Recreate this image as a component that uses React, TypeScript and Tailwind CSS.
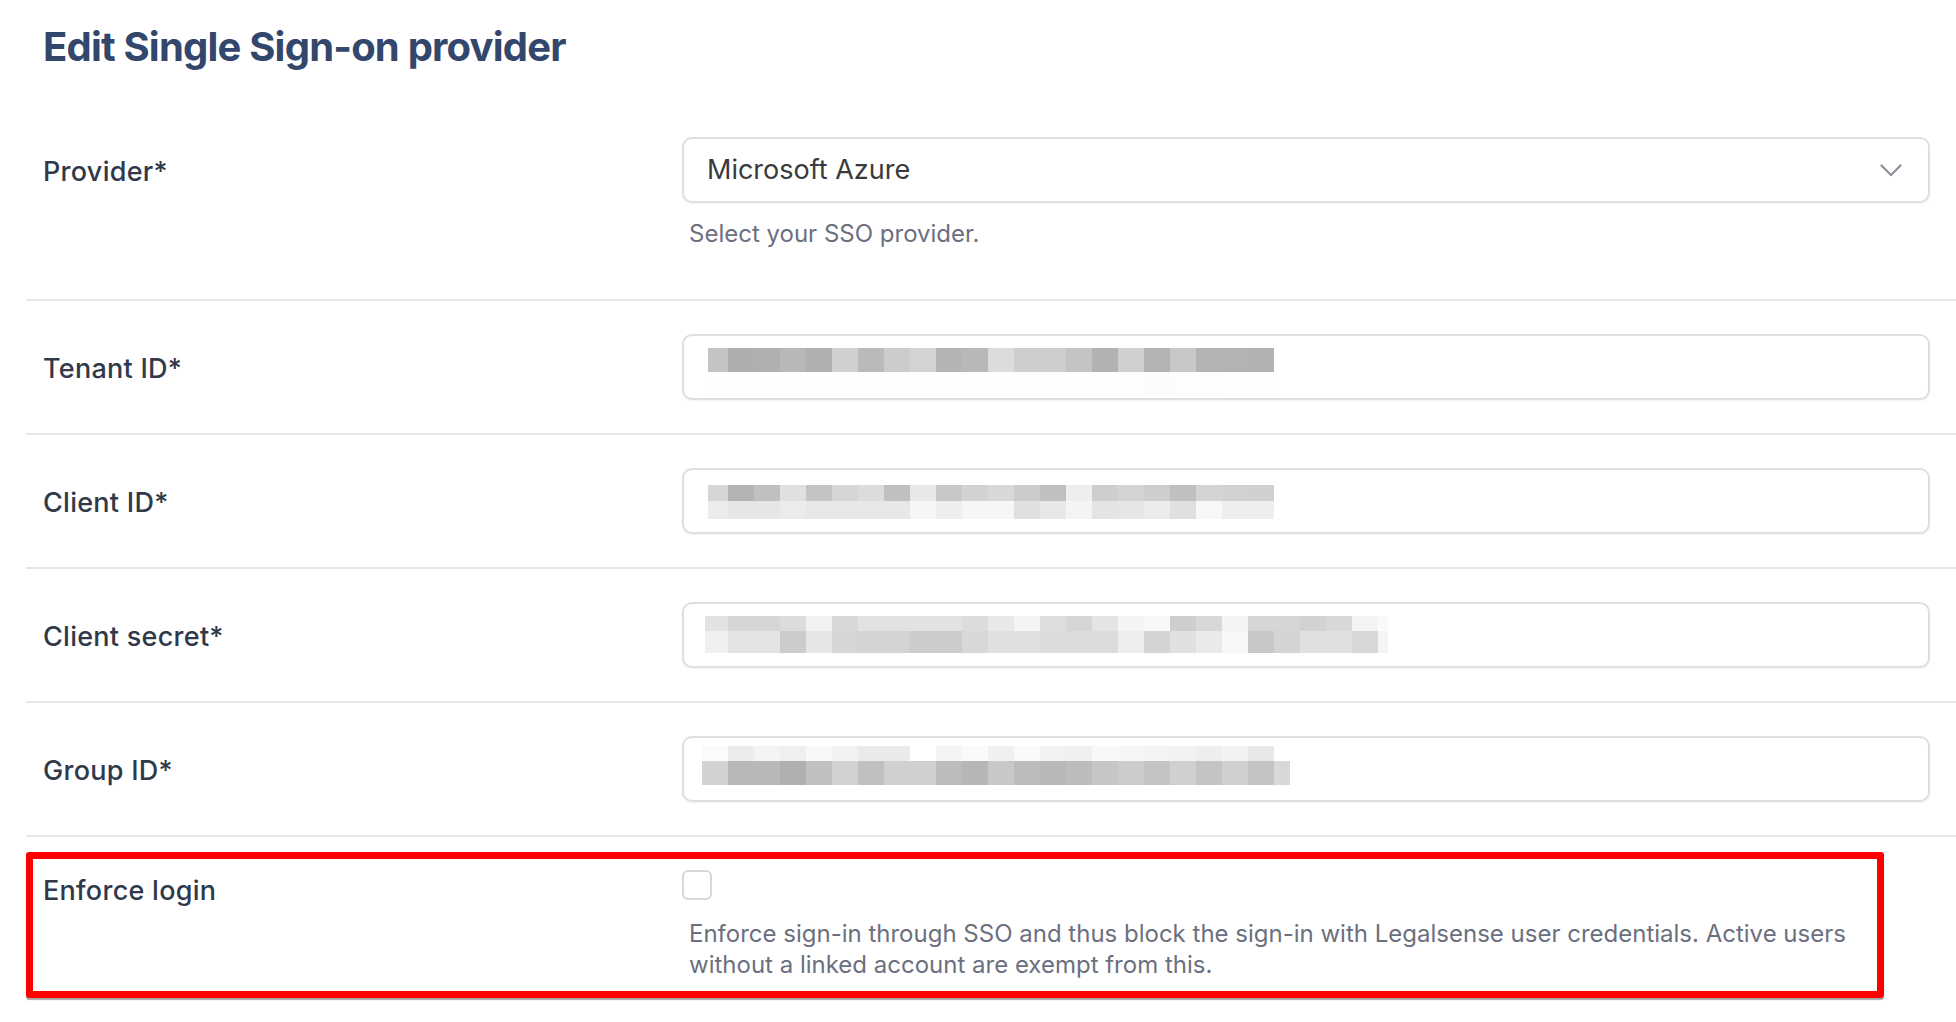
import React from "react";

type Row = { h: number; colors: string[] };
type MosaicSpec = { widths: number[]; rows: Row[] };

function hexes(list: string): string[] {
  return list.split(" ").map((c) => "#" + c + c + c);
}

function makeWidths(first: number, count: number, last?: number): number[] {
  const w = [first];
  for (let i = 0; i < count; i++) w.push(26);
  if (last) w.push(last);
  return w;
}

const tenant: MosaicSpec = {
  widths: makeWidths(20, 21),
  rows: [
    { h: 24, colors: hexes("c4 ae b0 b8 b0 d0 ba cc d3 b4 b8 dc ce ce c4 b2 cf b3 c8 b3 b3 b2") },
    { h: 22, colors: hexes("fe fe fe fe fe fe fe fe fe fe fe fe fe fe fe fe fe fc fd fd fe fe") },
  ],
};

const client: MosaicSpec = {
  widths: makeWidths(20, 21),
  rows: [
    { h: 16, colors: hexes("d6 b4 c0 e0 c4 d6 dc c0 e8 c8 d2 d8 cc c0 ee ce d4 ce c0 d4 d2 d0") },
    { h: 18, colors: hexes("ec e6 e6 eb e8 e8 e8 e8 f6 ee f6 f6 e0 e8 f4 e4 e6 ec e0 f8 ee ee") },
  ],
};

const secret: MosaicSpec = {
  widths: makeWidths(23, 25, 10),
  rows: [
    { h: 15, colors: hexes("e2 d6 d6 dc f2 d8 e2 e2 e2 e2 dc e8 f4 de d6 e4 f4 f8 ce d8 f4 d6 d6 d2 d8 f4 fa") },
    { h: 22, colors: hexes("f0 e4 e4 cc e6 d6 d4 d4 cc cc d8 e0 e0 dc dc dc ee d4 e0 ea f8 c8 d4 e0 e0 d8 f4") },
  ],
};

const group: MosaicSpec = {
  widths: makeWidths(26, 21, 16),
  rows: [
    { h: 15, colors: hexes("fb ec f4 ef f8 f2 ea ea ff f4 fa f0 fa f2 f0 f8 f6 f4 f2 ee f2 e8 ff") },
    { h: 24, colors: hexes("d2 b8 b8 b0 c0 d2 c0 d0 d0 bc b6 c8 bc b8 bc c6 cc c4 d0 c4 d0 c4 d8") },
  ],
};

function Mosaic({ spec }: { spec: MosaicSpec }) {
  const total = spec.widths.reduce((a, b) => a + b, 0);
  const height = spec.rows.reduce((a, r) => a + r.h, 0);
  const rects: React.ReactElement[] = [];
  let y = 0;
  spec.rows.forEach((row, ri) => {
    let x = 0;
    spec.widths.forEach((w, ci) => {
      rects.push(
        <rect key={ri + "-" + ci} x={x} y={y} width={w} height={row.h} fill={row.colors[ci] || "#ffffff"} />
      );
      x += w;
    });
    y += row.h;
  });
  return (
    <svg width={total} height={height} viewBox={`0 0 ${total} ${height}`} shapeRendering="crispEdges" className="block">
      {rects}
    </svg>
  );
}

const inputBox =
  "h-[66px] rounded-[10px] border-2 border-[#dcdfe4] bg-white shadow-[0_1px_2px_rgba(0,0,0,0.06)]";
const labelCls = "pl-[17px] pt-[15px] text-[27px] leading-[39px] font-medium tracking-[0.01em] text-[#30394a]";
const rowCls = "grid grid-cols-[656px_1fr] border-b-2 border-[#e6e7eb] pr-[26px]";

function FieldRow({ label, children }: { label: string; children: React.ReactNode }) {
  return (
    <div className={rowCls + " pt-[33px] pb-[33px]"}>
      <div className={labelCls}>{label}</div>
      <div>{children}</div>
    </div>
  );
}

export default function App() {
  return (
    <div className="min-h-screen bg-white pl-[26px] pt-[22px] font-[Inter,sans-serif]">
      <h1 className="pl-[17px] text-[40px] leading-[49px] font-bold tracking-[-0.02em] text-[#33466b]">
        Edit Single Sign-on provider
      </h1>

      <div className="mt-[32px]">
        <div className={rowCls + " pt-[34px] pb-[49px]"}>
          <div className={labelCls}>Provider*</div>
          <div>
            <div className={inputBox + " flex items-center justify-between pl-[23px] pr-[26px]"}>
              <span className="text-[27px] text-[#3a3a3c]">Microsoft Azure</span>
              <svg width="22" height="13" viewBox="0 0 22 13" fill="none" className="block">
                <polyline points="1.5,1.5 11,11 20.5,1.5" stroke="#8c909a" strokeWidth="2.2" strokeLinecap="round" strokeLinejoin="round" />
              </svg>
            </div>
            <div className="mt-[15px] pl-[7px] text-[24px] leading-[32px] text-[#6b7080]">Select your SSO provider.</div>
          </div>
        </div>

        <FieldRow label="Tenant ID*">
          <div className={inputBox + " pl-[24px] pt-[12px]"}>
            <Mosaic spec={tenant} />
          </div>
        </FieldRow>

        <FieldRow label="Client ID*">
          <div className={inputBox + " pl-[24px] pt-[15px]"}>
            <Mosaic spec={client} />
          </div>
        </FieldRow>

        <FieldRow label="Client secret*">
          <div className={inputBox + " pl-[21px] pt-[12px]"}>
            <Mosaic spec={secret} />
          </div>
        </FieldRow>

        <FieldRow label="Group ID*">
          <div className={inputBox + " pl-[18px] pt-[8px]"}>
            <Mosaic spec={group} />
          </div>
        </FieldRow>

        <div className="mt-[15px] w-[1858px] rounded-[3px] border-[7px] border-[#ff0000] shadow-[0_2px_1px_rgba(0,0,0,0.35)]">
          <div className="grid grid-cols-[649px_1fr]">
            <div className="pl-[10px] pt-[12px] text-[27px] leading-[39px] font-medium tracking-[0.01em] text-[#30394a]">
              Enforce login
            </div>
            <div className="pt-[11px] pb-[11px]">
              <div className="h-[30px] w-[30px] rounded-[6px] border-2 border-[#d4d7dc] bg-white" />
              <p className="mt-[18px] pl-[7px] pr-[20px] text-[24px] leading-[31px] text-[#6b7080]">
                Enforce sign-in through SSO and thus block the sign-in with Legalsense user credentials. Active users
                without a linked account are exempt from this.
              </p>
            </div>
          </div>
        </div>
      </div>
    </div>
  );
}
